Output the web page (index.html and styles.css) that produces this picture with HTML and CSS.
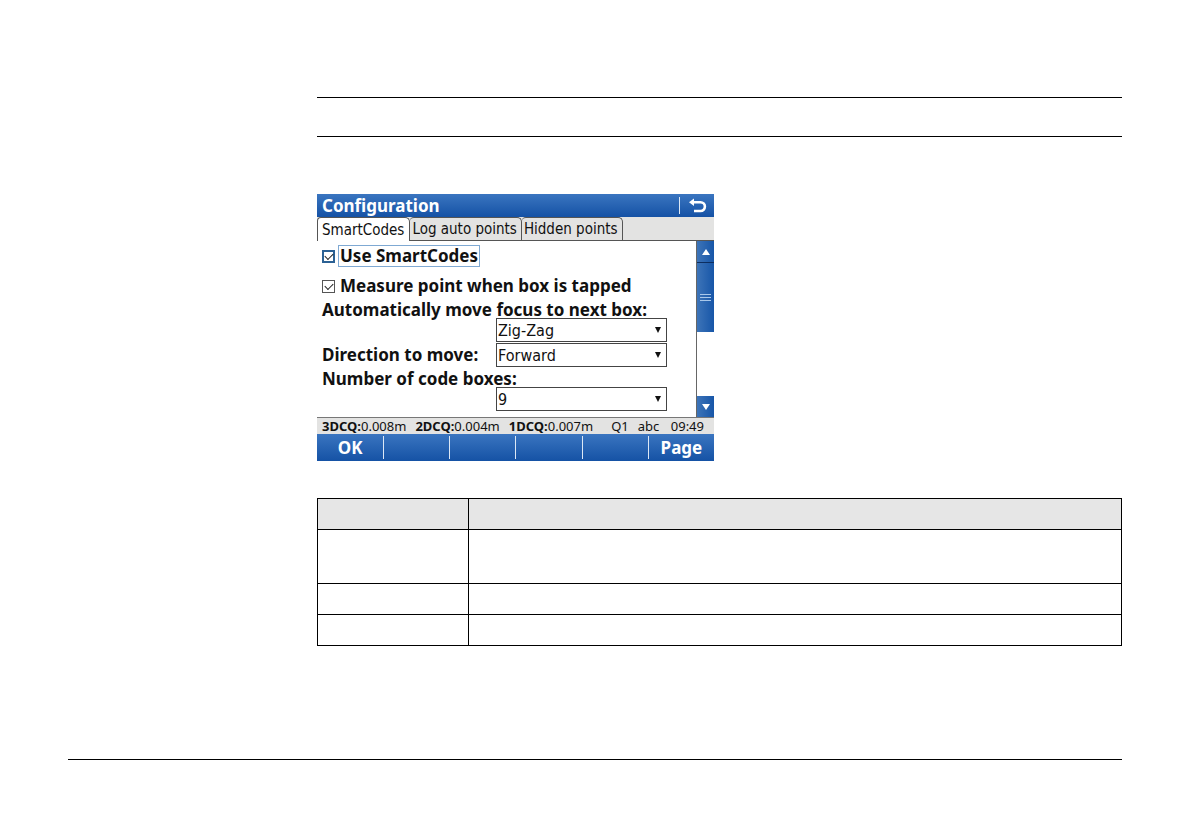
FILE: index.html
```
<!DOCTYPE html>
<html lang="en">
<head>
  <meta charset="UTF-8">
  <title>Configuration - SmartCodes</title>
  <meta name="viewport" content="width=device-width, initial-scale=1">
  <link rel="stylesheet" href="styles.css">
</head>
<body>

  <main class="content">
    <div class="note-band"></div>

    <section class="device">
      <header class="titlebar">
        <h1>Configuration</h1>
        <button class="back" type="button" aria-label="Back">
          <svg width="18" height="16" viewBox="0 0 18 16">
            <path d="M4 4.200h7.500a4.400 4.400 0 0 1 0 8.800H5" fill="none" stroke="#fff" stroke-width="2.600"/>
            <path d="M0 4.200L5 .5v7.500z" fill="#fff"/>
          </svg>
        </button>
      </header>

      <nav class="tabs">
        <button class="tab active" type="button">SmartCodes</button>
        <button class="tab" type="button">Log auto points</button>
        <button class="tab" type="button">Hidden points</button>
      </nav>

      <div class="panel">
        <form class="settings">
          <div class="row row-focus">
            <input type="checkbox" id="useCodes" class="focused" checked>
            <label for="useCodes" class="focus-label">Use SmartCodes</label>
          </div>
          <div class="row">
            <input type="checkbox" id="measure" checked>
            <label for="measure">Measure point when box is tapped</label>
          </div>
          <div class="field stacked">
            <label for="moveFocus">Automatically move focus to next box:</label>
            <div class="select"><select id="moveFocus"><option>Zig-Zag</option></select></div>
          </div>
          <div class="field">
            <label for="direction">Direction to move:</label>
            <div class="select"><select id="direction"><option>Forward</option></select></div>
          </div>
          <div class="field stacked">
            <label for="boxes">Number of code boxes:</label>
            <div class="select"><select id="boxes"><option>9</option></select></div>
          </div>
        </form>

        <div class="scrollbar">
          <button class="arrow" type="button" aria-label="Scroll up">
            <svg width="8" height="6" viewBox="0 0 8 6"><path d="M4 0l4 6H0z" fill="#fff"/></svg>
          </button>
          <div class="thumb"><span class="grip"></span></div>
          <button class="arrow down" type="button" aria-label="Scroll down">
            <svg width="8" height="6" viewBox="0 0 8 6"><path d="M0 0h8L4 6z" fill="#fff"/></svg>
          </button>
        </div>
      </div>

      <div class="status">
        <span><b>3DCQ:</b>0.008m</span>
        <span><b>2DCQ:</b>0.004m</span>
        <span><b>1DCQ:</b>0.007m</span>
        <span class="mode">Q1</span>
        <span>abc</span>
        <span class="time">09:49</span>
      </div>

      <div class="softkeys">
        <button type="button">OK</button>
        <button type="button" aria-label="F2"></button>
        <button type="button" aria-label="F3"></button>
        <button type="button" aria-label="F4"></button>
        <button type="button" aria-label="F5"></button>
        <button type="button">Page</button>
      </div>
    </section>

    <table class="fields">
      <thead>
        <tr><th></th><th></th></tr>
      </thead>
      <tbody>
        <tr class="tall"><td></td><td></td></tr>
        <tr><td></td><td></td></tr>
        <tr><td></td><td></td></tr>
      </tbody>
    </table>
  </main>

  <footer class="page-footer"></footer>

</body>
</html>
```
FILE: styles.css
```
* {
  box-sizing: border-box;
}

body {
  margin: 0;
  padding: 97px 68px 0;
  background-color: #fff;
  color: #111;
  font-family: "Noto Sans", "Open Sans", sans-serif;
}

button, select {
  margin: 0;
  padding: 0;
  border: none;
  border-radius: 0;
  font-family: inherit;
  color: inherit;
}

.content {
  margin-left: 249px;
}

.note-band {
  height: 40px;
  margin-bottom: 57px;
  border-top: 1px solid #000;
  border-bottom: 1px solid #000;
}

/* Device screen */
.device {
  max-width: 397px;
}

.titlebar {
  display: flex;
  justify-content: space-between;
  align-items: center;
  height: 23px;
  padding-left: 5px;
  background: linear-gradient(#3a75c0, #1552a5);
  color: #fff;
}

.titlebar h1 {
  margin: 0;
  font-size: 17px;
  line-height: 24px;
}

.back {
  display: flex;
  align-items: center;
  height: 17px;
  padding: 0 7px 0 9px;
  border-left: 1px solid #dce8f6;
  background: none;
}

/* Tabs */
.tabs {
  display: flex;
  height: 24px;
  background-color: #e3e3e2;
  box-shadow: inset 0 -1px #555;
}

.tab {
  height: 23px;
  padding: 0 4px 0 2px;
  border: 1px solid #555;
  border-left: none;
  border-bottom: none;
  border-radius: 4px 5px 0 0;
  background-color: #e3e3e2;
  font-family: "DejaVu Sans Condensed", sans-serif;
  font-size: 15px;
  line-height: 22px;
}

.tab.active {
  height: 24px;
  padding: 0 5px 0 4px;
  border-left: 1px solid #555;
  background-color: #fff;
}

/* Settings panel */
.panel {
  display: flex;
  min-height: 176px;
}

.settings {
  flex: 1;
  padding: 4px 0 0 5px;
}

label {
  font-weight: bold;
  font-size: 17px;
  line-height: 20px;
  white-space: nowrap;
}

.row {
  display: flex;
  align-items: center;
  gap: 5px;
  height: 24px;
}

.row-focus {
  height: 22px;
  margin-bottom: 7px;
  gap: 3px;
}

.focus-label {
  padding: 0 1px;
  border: 1px solid #7fa9d3;
}

input[type="checkbox"] {
  appearance: none;
  display: grid;
  place-items: center;
  width: 13px;
  height: 13px;
  margin: 0;
  border: 1px solid #555;
  background-color: #fff;
}

input[type="checkbox"].focused {
  border: 2px solid #2b6194;
}

input[type="checkbox"]:checked::before {
  content: "";
  width: 7px;
  height: 4px;
  margin-bottom: 2px;
  border: solid #222;
  border-width: 0 0 1px 1px;
  transform: rotate(-45deg);
}

.field {
  display: flex;
  justify-content: space-between;
  align-items: center;
  height: 25px;
  padding-right: 29px;
}

.field.stacked {
  flex-direction: column;
  align-items: stretch;
  height: auto;
}

.stacked label {
  line-height: 24px;
  margin-bottom: -4px;
}

.select {
  position: relative;
  align-self: flex-end;
  width: 171px;
}

.select select {
  appearance: none;
  display: block;
  width: 100%;
  height: 24px;
  padding-left: 1px;
  border: 1px solid #444;
  background-color: #fff;
  font-family: "DejaVu Sans Condensed", sans-serif;
  font-size: 16px;
}

.select::after {
  content: "";
  position: absolute;
  top: 9px;
  right: 6px;
  border: solid transparent;
  border-width: 6px 3px 0;
  border-top-color: #111;
  pointer-events: none;
}

/* Scrollbar */
.scrollbar {
  display: flex;
  flex-direction: column;
  width: 18px;
  border-left: 1px solid #666;
}

.arrow {
  display: grid;
  place-items: center;
  height: 21px;
  background: linear-gradient(90deg, #3d74b8, #1756a8);
}

.arrow.down {
  margin-top: auto;
}

.thumb {
  display: grid;
  place-items: center;
  height: 70px;
  border-top: 1px solid #0d2e60;
  background: linear-gradient(90deg, #3d74b8, #1756a8);
}

.grip {
  width: 11px;
  height: 7px;
  border: solid #a9c8ea;
  border-width: 1px 0;
  background: linear-gradient(#a9c8ea, #a9c8ea) center / 100% 1px no-repeat;
}

/* Status line */
.status {
  display: flex;
  gap: 9px;
  height: 17px;
  padding: 0 10px 0 5px;
  border-top: 1px solid #777;
  background-color: #e3e3e2;
  font-size: 13px;
  line-height: 17px;
  white-space: nowrap;
}

.mode {
  margin-left: 9px;
}

.time {
  margin-left: auto;
}

/* Soft keys */
.softkeys {
  display: grid;
  grid-template-columns: repeat(6, 1fr);
  height: 27px;
  padding: 2px 0;
  background: linear-gradient(#3a75c0, #1552a5);
}

.softkeys button {
  background: none;
  color: #fff;
  font-size: 17px;
  font-weight: bold;
  line-height: 23px;
}

.softkeys button + button {
  border-left: 1px solid #dce8f6;
}

/* Field table */
.fields {
  width: 100%;
  margin-top: 37px;
  border-collapse: collapse;
  table-layout: fixed;
}

.fields th, .fields td {
  height: 31px;
  padding: 0;
  border: 1px solid #000;
}

.fields th {
  background-color: #e6e6e6;
}

.fields th:first-child {
  width: 151px;
}

.fields .tall td {
  height: 54px;
}

.page-footer {
  margin-top: 113px;
  border-top: 1px solid #000;
}
```
